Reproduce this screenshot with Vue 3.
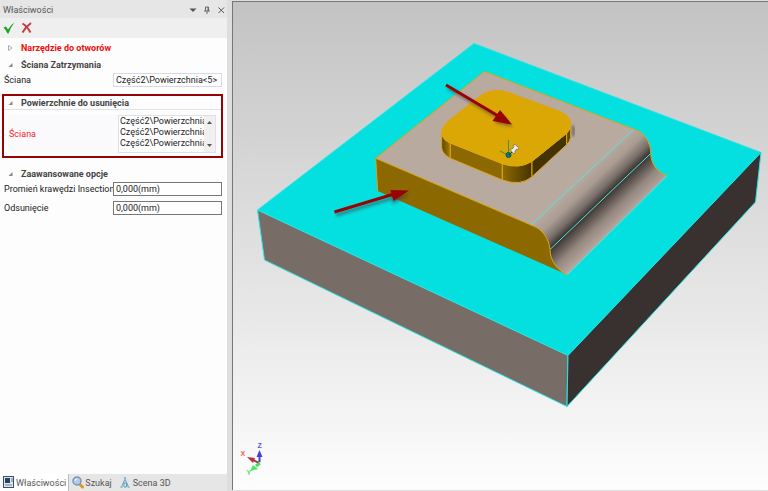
<script setup>
import { ref } from 'vue'

const openHoles = ref(false)
const face = ref('Część2\\Powierzchnia<5>')
const faces = ref(['Część2\\Powierzchnia', 'Część2\\Powierzchnia', 'Część2\\Powierzchnia'])
const radius = ref('0,000(mm)')
const offset = ref('0,000(mm)')
</script>

<template>
  <div class="app">
    <aside class="panel">
      <header class="title">
        <h1>Właściwości</h1>
        <button type="button" aria-label="Menu">
          <svg width="8" height="8" viewBox="0 0 8 8"><path d="M0.500 2.500h7L4 6z" fill="#555" /></svg>
        </button>
        <button type="button" aria-label="Przypnij">
          <svg width="8" height="8" viewBox="0 0 8 8" fill="none" stroke="#666"><path d="M2.500 5V1h3v4M5 1v4M1 5h6M4 5v3" /></svg>
        </button>
        <button type="button" aria-label="Zamknij">
          <svg width="8" height="8" viewBox="0 0 8 8" fill="none" stroke="#555"><path d="M1.500 1.500l5.500 5.500M7 1.500L1.500 7" /></svg>
        </button>
      </header>

      <div class="toolbar">
        <button type="button" aria-label="OK">
          <svg width="12" height="12" viewBox="0 0 12 12"><path d="M0.500 5.500L3 4.500 5 7.500Q8 2.500 11.500 0.500 7.500 5.500 5.500 11.500H4.500Q3 8 0.500 5.500z" fill="#16a51c" /></svg>
        </button>
        <button type="button" aria-label="Anuluj">
          <svg width="12" height="12" viewBox="0 0 12 12" fill="none" stroke="#c9383b" stroke-width="2"><path d="M1.500 1.500Q6 4 9.500 10.500" /><path d="M10 1Q5 4.500 1.500 10.500" /></svg>
        </button>
      </div>

      <form class="props" @submit.prevent>
        <button class="section alert" type="button" :aria-expanded="openHoles">
          <svg width="5" height="6" viewBox="0 0 5 6"><path d="M0.500 0.500v5L4 3z" fill="#fff" stroke="#aaa" /></svg>
          Narzędzie do otworów
        </button>

        <button class="section" type="button" aria-expanded="true">
          <svg width="5" height="6" viewBox="0 0 5 6"><path d="M4.500 1v4h-4z" fill="#888" /></svg>
          Ściana Zatrzymania
        </button>
        <div class="row">
          <label for="face">Ściana</label>
          <input id="face" v-model="face" class="soft" type="text">
        </div>

        <section class="marked">
          <button class="section" type="button" aria-expanded="true">
            <svg width="5" height="6" viewBox="0 0 5 6"><path d="M4.500 1v4h-4z" fill="#888" /></svg>
            Powierzchnie do usunięcia
          </button>
          <div class="faces">
            <span id="faces-label" class="faces-label">Ściana</span>
            <div class="listbox">
              <ul role="listbox" aria-labelledby="faces-label">
                <li v-for="(item, i) in faces" :key="i" role="option">{{ item }}</li>
              </ul>
              <div class="scroll">
                <button type="button" aria-label="W górę"><svg width="5" height="3" viewBox="0 0 5 3"><path d="M0 3h5L2.500 0z" fill="#555" /></svg></button>
                <button type="button" aria-label="W dół"><svg width="5" height="3" viewBox="0 0 5 3"><path d="M0 0h5L2.500 3z" fill="#555" /></svg></button>
              </div>
            </div>
          </div>
        </section>

        <button class="section" type="button" aria-expanded="true">
          <svg width="5" height="6" viewBox="0 0 5 6"><path d="M4.500 1v4h-4z" fill="#888" /></svg>
          Zaawansowane opcje
        </button>
        <div class="fields">
          <div class="row">
            <label for="radius">Promień krawędzi Insection</label>
            <input id="radius" v-model="radius" type="text">
          </div>
          <div class="row">
            <label for="offset">Odsunięcie</label>
            <input id="offset" v-model="offset" type="text">
          </div>
        </div>
      </form>

      <nav class="tabs">
        <button type="button" class="active">
          <svg width="12" height="13" viewBox="0 0 12 13"><rect x="0.500" y="0.500" width="10" height="11" fill="#dce6ee" stroke="#36506b" /><path d="M2 2h5v5H2z" fill="#24435f" /><path d="M8 3h2M8 5h2M2 9h7" stroke="#6c8195" /></svg>
          Właściwości
        </button>
        <button type="button">
          <svg width="12" height="13" viewBox="0 0 12 13"><path d="M8 8.500l2.500 2.500" stroke="#d99a22" stroke-width="3" stroke-linecap="round" /><circle cx="5" cy="5" r="4" fill="#a9ccef" stroke="#8292ae" stroke-width="1.500" /><path d="M3 5q0-2 2-2" fill="none" stroke="#fff" /></svg>
          Szukaj
        </button>
        <button type="button" class="scene-tab">
          <svg width="10" height="13" viewBox="0 0 10 13" fill="none" stroke="#5f9cc0"><path d="M5 1v3M5 3L1.500 11M5 3l3.500 8M3.500 7h3M4 7v4M6.500 7v4" /><path d="M4 1h2v3H4zM0.500 10h2v2h-2zM4 10h2v2H4zM7.500 10h2v2h-2z" fill="#8bbdd7" stroke="none" /></svg>
          Scena 3D
        </button>
      </nav>
    </aside>

    <main class="scene">
      <svg viewBox="233 2 535 488" preserveAspectRatio="xMidYMid meet" role="img" aria-label="Model 3D">
        <defs>
          <linearGradient id="fold" gradientUnits="userSpaceOnUse" x1="531" y1="225" x2="573" y2="269">
            <stop offset="0" stop-color="#b9aaa0" />
            <stop offset="0.200" stop-color="#aa9c93" />
            <stop offset="0.370" stop-color="#7a706a" />
            <stop offset="0.500" stop-color="#3a3532" />
            <stop offset="0.600" stop-color="#5c534e" />
            <stop offset="0.770" stop-color="#94877f" />
            <stop offset="1" stop-color="#b9aaa0" />
          </linearGradient>
          <linearGradient id="leftCorner">
            <stop offset="0" stop-color="#5e4700" />
            <stop offset="1" stop-color="#a47b06" />
          </linearGradient>
          <linearGradient id="frontCorner">
            <stop offset="0" stop-color="#906a00" />
            <stop offset="1" stop-color="#443300" />
          </linearGradient>
          <filter id="soft" x="-30%" y="-30%" width="160%" height="160%"><feGaussianBlur stdDeviation="1.500" /></filter>
        </defs>

        <g stroke-linejoin="round">
          <path d="M474 43.500L761 152.500 568 355.500 257.500 210z" fill="#04dfdf" stroke="#24e6e6" />
          <path d="M257.500 210L568 355.500 567 406.500 264.500 260z" fill="#776c66" stroke="#24e6e6" />
          <path d="M761 152.500L568 355.500 567 406.500 755.500 202z" fill="#38312f" stroke="#24e6e6" />
        </g>

        <path d="M484.500 71.500L375.700 158.300 531 225 634 129.300z" fill="#b9aaa0" />
        <path d="M531 225C543 229 549 239 550 249.500C550 261 558 271 567.300 274.700L667 175.700C658 173 651 164 650.700 153.500C651 142 644 132 634 129.300z" fill="url(#fold)" />
        <path d="M375.700 158.300L531 225C543 229 549 239 550 249.500C550 261 558 271 567.300 274.700L377.700 191z" fill="#8c6800" />
        <path d="M531 225L634 129.300M550 249.500L650.700 153.500M567.300 274.700L667 175.700" fill="none" stroke="#55e6e0" />
        <path d="M377.700 191L375.700 158.300 484.500 71.500 634 129.300C644 132 651 142 650.700 153.500C651 164 658 173 667 175.700M375.700 158.300L531 225C543 229 549 239 550 249.500C550 261 558 271 567.300 274.700" fill="none" stroke="#dda512" />

        <path d="M572 126l2 3-1 7" fill="none" stroke="#6d635e" stroke-width="3" filter="url(#soft)" />
        <g transform="translate(360 60) scale(0.333333)" stroke="#dda512" stroke-width="3">
          <path d="M245 218V262Q246 282 271 295V249Q246 238 245 218z" fill="url(#leftCorner)" />
          <path d="M271 249L427 311V360L271 295z" fill="#8c6800" />
          <path d="M427 311Q477 328 516 304V350Q482 380 427 360z" fill="url(#frontCorner)" />
          <path d="M516 304L620 220V254L516 350z" fill="#443300" />
          <path d="M620 220Q632 210 632 190V232Q630 246 620 254z" fill="#5e4700" />
          <path d="M245 218Q245 200 268 180L357 110Q392 82 440 95L587 149Q632 164 632 190Q632 208 620 220L516 304Q477 328 427 311L271 249Q246 238 245 218z" fill="#dba704" />
        </g>

        <g fill="none" stroke="#3e8f50">
          <path d="M508.500 140v15M500 151l8 4" />
        </g>
        <circle cx="508.500" cy="155" r="2.500" fill="#087b7b" stroke="#075454" />
        <path d="M509 155l3-3" stroke="#333" />
        <path d="M510 149.500l3-1 1-2-1-1 2-1 4 3.500-1 1.500-1.500-0.500-1.500 2v2l-1 1z" fill="#f2f2f2" stroke="#666" stroke-width="0.700" />

        <g fill="#444" stroke="#444" stroke-width="3" opacity="0.600" transform="translate(2 3)" filter="url(#soft)">
          <path d="M446 85L500 117M334 212L394 194" />
          <path d="M511 124l-18-4 7-9zM408 191l-17 10-2-8z" stroke="none" />
        </g>
        <g fill="#990205">
          <path d="M446 85L500 117M334.500 212L394 194" stroke="#990205" stroke-width="3" />
          <path d="M512 124.500L492.500 121 500 110zM409 190.500L393.500 201 390.500 190z" />
        </g>

        <g class="axes">
          <path d="M259.500 462V455" stroke="#4244cc" stroke-width="2" />
          <path d="M259.500 450l3 7h-6z" fill="#4244cc" />
          <path d="M259 463l-6-3" stroke="#b33336" stroke-width="2" />
          <path d="M247 457l8 1-2 5z" fill="#b33336" />
          <path d="M260 463l-4 3" stroke="#4ad95b" stroke-width="3" />
          <path d="M250 471l3-6 5 4z" fill="#4de65c" />
          <text x="257.500" y="448" fill="#5557dd">Z</text>
          <text x="240.500" y="456" fill="#ee5b5b">X</text>
          <text x="246.500" y="475" fill="#4de65c">Y</text>
        </g>
      </svg>
    </main>
  </div>
</template>

<style>
body {
  margin: 0;
}
</style>

<style scoped>
.app {
  display: flex;
  box-sizing: border-box;
  min-height: 100vh;
  background: #dedede;
  color: #222;
  font: 9px/12px Roboto, "Open Sans", sans-serif;
}

button {
  display: flex;
  align-items: center;
  margin: 0;
  padding: 0;
  border: 0;
  background: none;
  color: inherit;
  font: inherit;
}

svg {
  display: block;
  flex: none;
}

.panel {
  display: flex;
  flex: none;
  flex-direction: column;
  width: 227px;
  margin-right: 5px;
  background: #fdfdfd;
}

.title {
  display: flex;
  align-items: center;
  gap: 6px;
  height: 18px;
  padding: 2px 1px 0 3px;
  box-sizing: border-box;
  background: #e6e6e6;
}

.title h1 {
  flex: 1;
  margin: 0;
  color: #555;
  font: inherit;
}

.title button {
  width: 8px;
}

.title button:last-child {
  margin-right: 1px;
}

.toolbar {
  display: flex;
  align-items: center;
  gap: 6px;
  height: 20px;
  padding-left: 3px;
  background: #efefef;
}

.props {
  flex: 1;
  padding-top: 1px;
}

.section {
  gap: 8px;
  height: 17px;
  padding-left: 8px;
  color: #444;
  font-weight: 700;
}

.alert {
  color: #f40d0d;
}

.row {
  display: grid;
  grid-template-columns: 109px 1fr;
  align-items: center;
  padding: 0 5px 0 4px;
}

.row label {
  white-space: nowrap;
}

.row input {
  box-sizing: border-box;
  width: 100%;
  min-width: 0;
  height: 14px;
  padding: 0 2px;
  border: 1px solid #777;
  background: #fff;
  color: #222;
  font: inherit;
}

.row .soft {
  border-color: #d5dae4;
}

.marked {
  margin: 7px 4px 7px 2px;
  border: 2px solid #990205;
}

.marked .section {
  width: 100%;
  height: 14px;
  padding-left: 4px;
  border-bottom: 1px solid #dfe3ec;
}

.faces {
  display: flex;
  align-items: center;
  justify-content: space-between;
  margin: 5px 2px 3px 4px;
  padding: 0 3px 0 1px;
  background: #fafafd;
}

.faces-label {
  color: #f22;
}

.listbox {
  display: flex;
  box-sizing: border-box;
  width: 98px;
  height: 38px;
  border: 1px solid #dde1ea;
  background: #fff;
}

.listbox ul {
  flex: 1;
  min-width: 0;
  margin: 0;
  padding: 0 0 0 1px;
  line-height: 11px;
  list-style: none;
  white-space: nowrap;
}

.scroll {
  display: flex;
  flex-direction: column;
  justify-content: space-between;
  width: 11px;
  padding: 5px 0;
  box-sizing: border-box;
  background: #f0f0f0;
}

.scroll button {
  justify-content: center;
}

.fields {
  display: grid;
  gap: 5px;
}

.tabs {
  display: flex;
  height: 17px;
  background: #e6e6e6;
  color: #555;
}

.tabs button {
  gap: 1px;
  padding: 0 2px 0 3px;
}

.tabs .scene-tab {
  gap: 3px;
  padding-left: 6px;
}

.tabs .active {
  border-right: 1px solid #bbb;
  background: #fff;
}

.scene {
  display: flex;
  flex: 1;
  min-width: 0;
  margin: 1px 0;
  border-top: 1px solid #777;
  border-left: 1px solid #777;
  background: linear-gradient(#c3c3c3, #fdfdfd);
}

.scene svg {
  flex: 1;
  min-width: 0;
}

.axes text {
  font: 700 7px "Liberation Sans", sans-serif;
}
</style>
